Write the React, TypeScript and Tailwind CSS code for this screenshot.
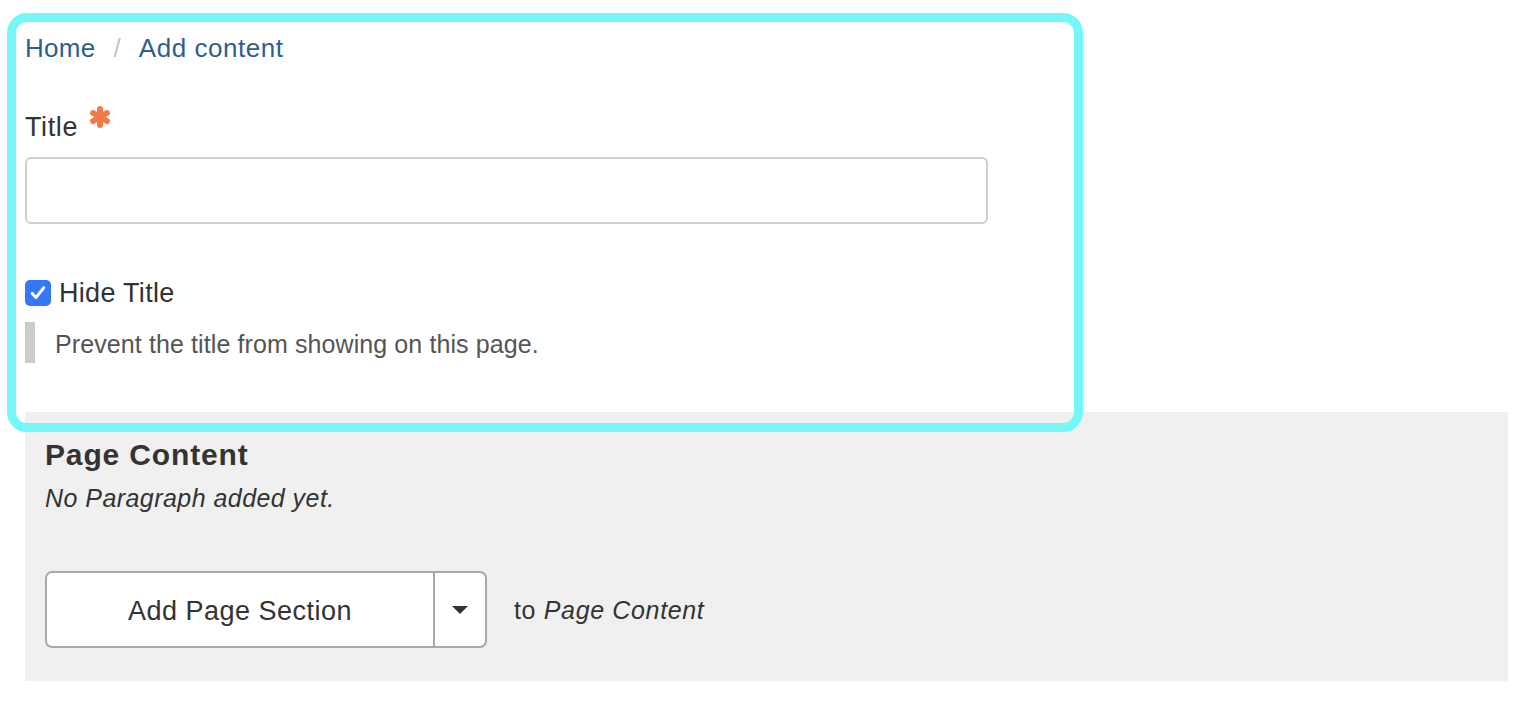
import React, { useState } from 'react';

function Asterisk() {
  return (
    <svg viewBox="0 0 24 24" className="w-[24px] h-[24px]" aria-hidden="true">
      <g stroke="#f2794a" strokeWidth="6" strokeLinecap="round">
        <line x1="12" y1="4" x2="12" y2="20" />
        <line x1="5.1" y1="8" x2="18.9" y2="16" />
        <line x1="5.1" y1="16" x2="18.9" y2="8" />
      </g>
    </svg>
  );
}

function CheckBox({ checked, onChange }: { checked: boolean; onChange: () => void }) {
  return (
    <button
      type="button"
      onClick={onChange}
      className={
        checked
          ? 'w-[26px] h-[26px] rounded-[5px] bg-[#3478f6] flex items-center justify-center shrink-0'
          : 'w-[26px] h-[26px] rounded-[5px] bg-white border-2 border-[#999] flex items-center justify-center shrink-0'
      }
    >
      {checked && (
        <svg viewBox="0 0 24 24" className="w-[20px] h-[20px]">
          <path d="M5 12.5l4.5 5L19 5.5" fill="none" stroke="#fff" strokeWidth="3.6" strokeLinecap="round" strokeLinejoin="round" />
        </svg>
      )}
    </button>
  );
}

export default function App() {
  const [title, setTitle] = useState('');
  const [hideTitle, setHideTitle] = useState(true);

  return (
    <div className="relative w-full h-[704px] bg-white overflow-hidden font-['Liberation_Sans',Arial,sans-serif] text-[#333]">
      <div className="pl-[25px] pr-[22px]">
        {/* Breadcrumb */}
        <nav className="pt-[33px] flex items-center text-[26px] leading-[30px] text-[#2e5f8c]">
          <a href="#" className="tracking-[0.3px]">Home</a>
          <span className="text-[#c4c4c4] mx-[18px]">/</span>
          <a href="#" className="tracking-[0.55px]">Add content</a>
        </nav>

        {/* Title field */}
        <div className="mt-[48px] flex items-start">
          <label className="text-[27px] leading-[32px] tracking-[0.6px]">Title</label>
          <span className="ml-[10px] -mt-[6px]">
            <Asterisk />
          </span>
        </div>
        <input
          value={title}
          onChange={e => setTitle(e.target.value)}
          className="mt-[14px] block w-[963px] h-[67px] rounded-[6px] border-2 border-[#d0d0d0] px-4 text-[26px] outline-none"
        />

        {/* Hide title */}
        <div className="mt-[53px] flex items-center gap-[8px] h-[32px]">
          <CheckBox checked={hideTitle} onChange={() => setHideTitle(!hideTitle)} />
          <span className="text-[27px] leading-[32px] tracking-[0.3px]">Hide Title</span>
        </div>
        <div className="mt-[13px] border-l-[10px] border-[#cccccc] pl-[20px] pt-[4px] text-[25px] leading-[37px] text-[#555] tracking-[0.1px]">
          Prevent the title from showing on this page.
        </div>

        {/* Page content */}
        <div className="mt-[49px] bg-[#f0f0f0] px-[20px] pt-[26px] pb-[33px]">
          <h2 className="text-[30px] leading-[34px] font-bold tracking-[0.85px]">Page Content</h2>
          <p className="mt-[11px] text-[25px] leading-[30px] italic tracking-[0.45px]">No Paragraph added yet.</p>
          <div className="mt-[58px] flex items-center">
            <div className="flex h-[77px] rounded-[7px] border-2 border-[#a8a8a8] bg-white overflow-hidden">
              <button type="button" className="w-[386px] pt-[3px] text-[27px] tracking-[0.5px] text-[#333]">
                Add Page Section
              </button>
              <button type="button" className="w-[52px] border-l-2 border-[#a8a8a8] flex items-center justify-center">
                <svg viewBox="0 0 16 8" className="w-[16px] h-[8px]">
                  <path d="M0 0h16L8 8z" fill="#333" />
                </svg>
              </button>
            </div>
            <span className="ml-[27px] pt-[3px] text-[25px] tracking-[0.65px]">
              to <em>Page Content</em>
            </span>
          </div>
        </div>
      </div>

      {/* Highlight overlay */}
      <div className="absolute left-[7px] top-[13px] w-[1076px] h-[419px] rounded-[20px] border-[9px] border-[#75f7f8] pointer-events-none" />
    </div>
  );
}
